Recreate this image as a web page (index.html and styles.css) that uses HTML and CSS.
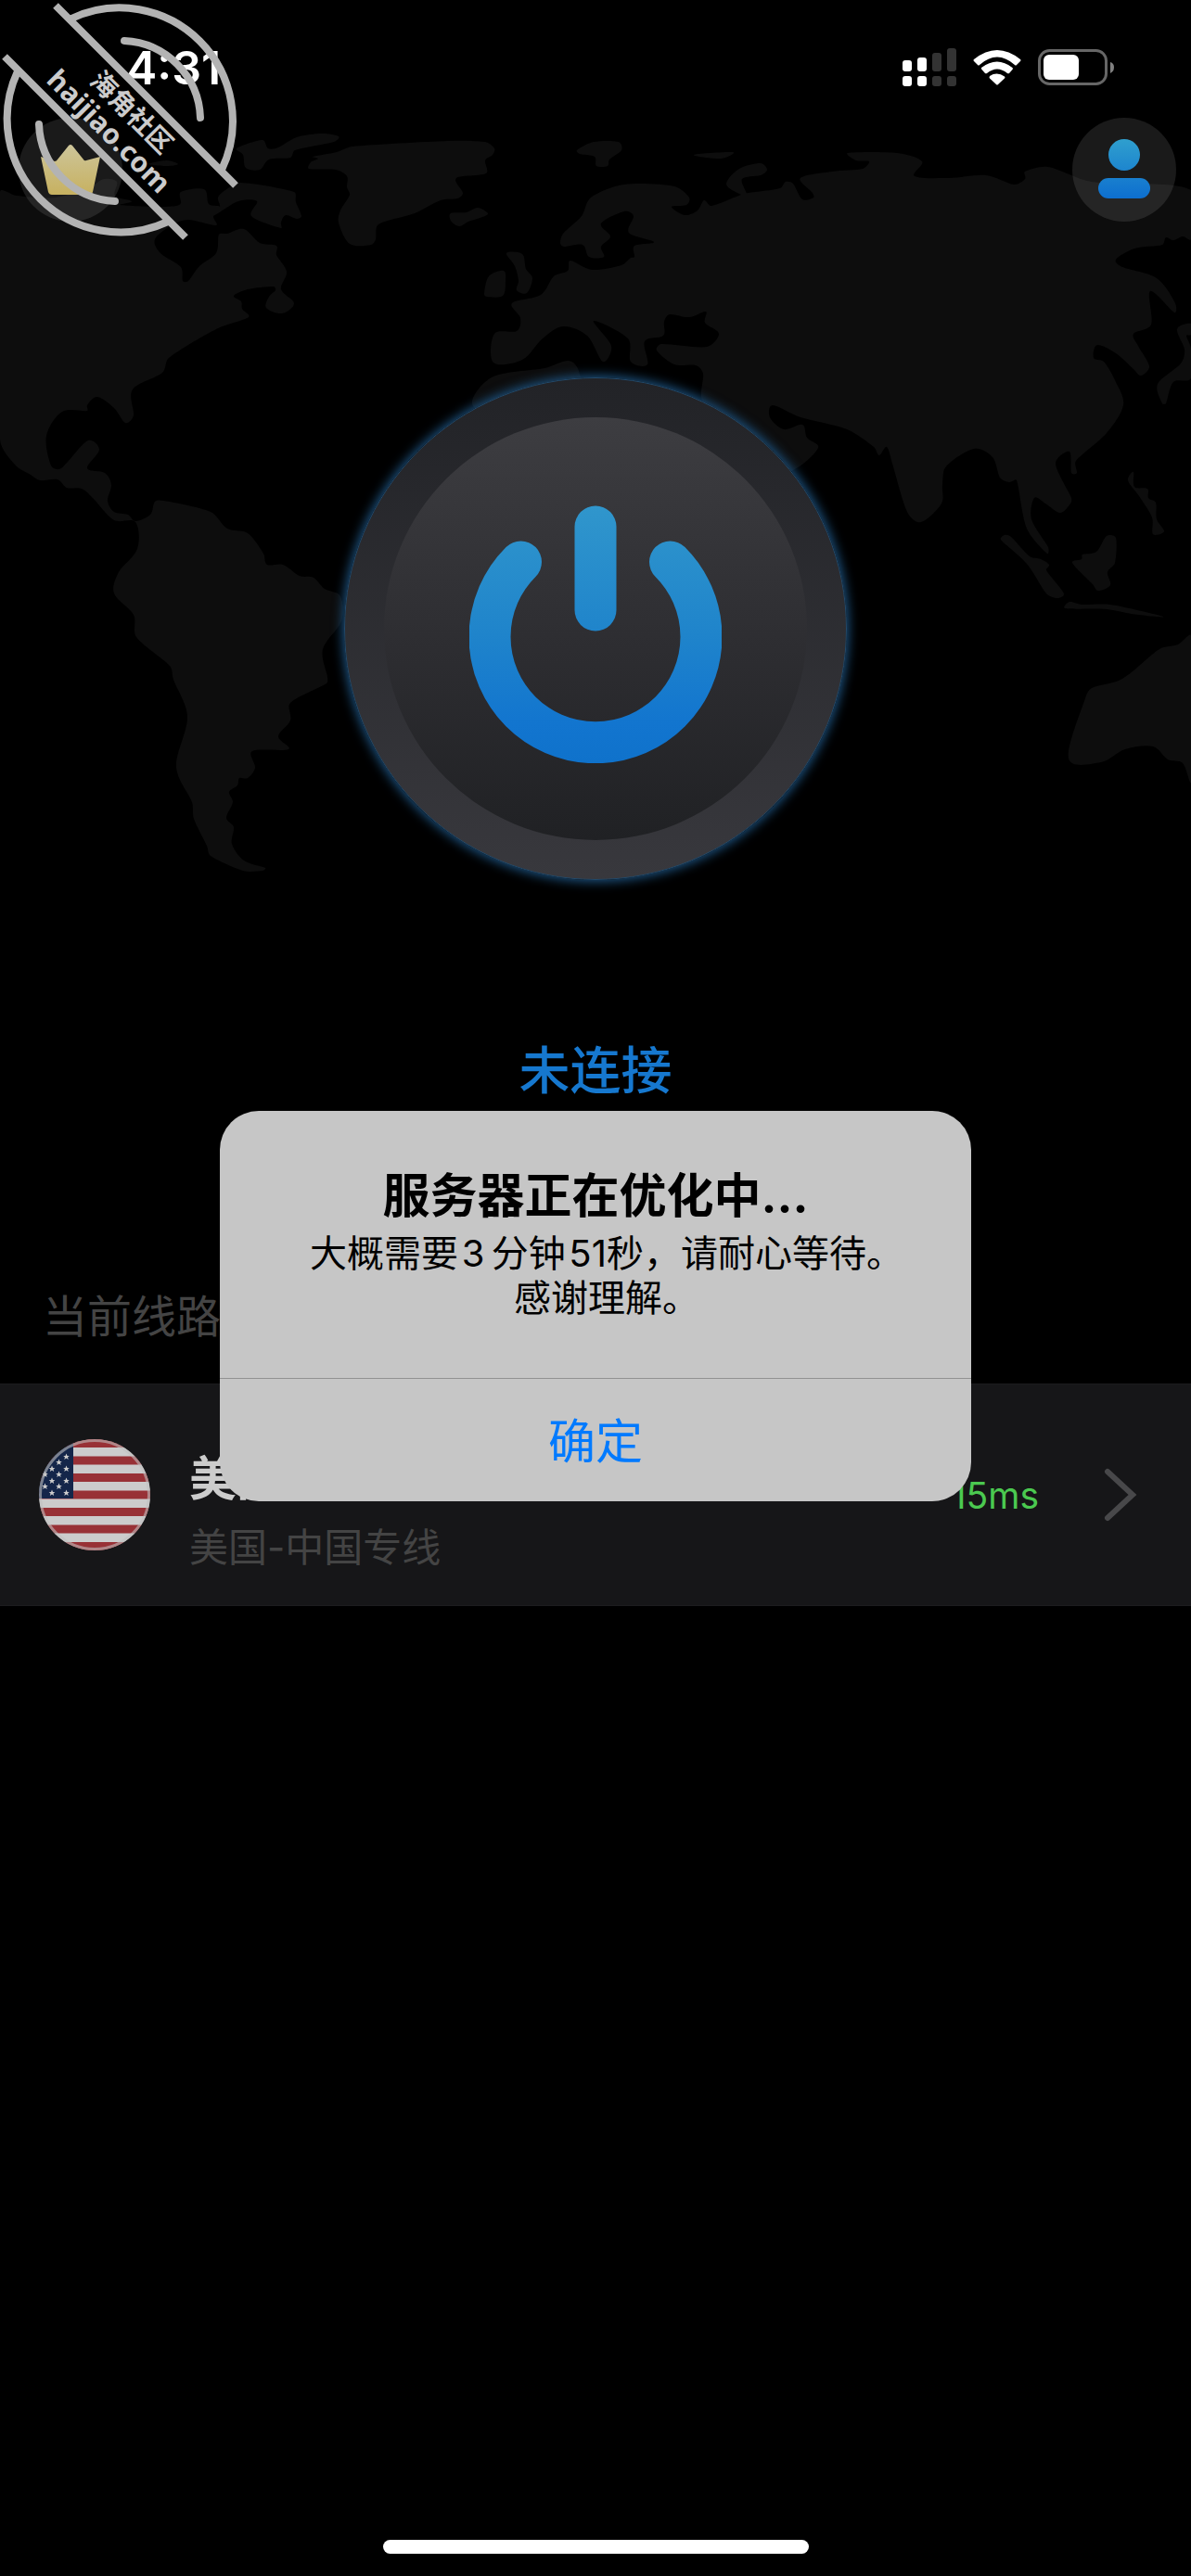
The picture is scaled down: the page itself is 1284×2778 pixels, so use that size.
FILE: index.html
```html
<!DOCTYPE html>
<html lang="zh-CN">

<head>
    <meta charset="UTF-8">
    <meta name="viewport" content="width=device-width, initial-scale=1.0">
    <title>未连接</title>
    <link rel="stylesheet" href="styles.css">
</head>

<body>
    <svg class="world-map" viewBox="0 0 1284 960" aria-hidden="true">
        <path id="land" />
    </svg>

    <header class="status-bar">
        <span class="time">4:31</span>
        <div class="status-icons">
            <svg width="58" height="42" viewBox="0 0 58 42" fill="#fff">
                <rect x="0" y="13" width="10" height="12" rx="3" />
                <rect x="16" y="10" width="10" height="15" rx="3" />
                <rect x="32" y="5" width="10" height="20" rx="3" fill="#333" />
                <rect x="48" y="0" width="10" height="25" rx="3" fill="#333" />
                <rect x="0" y="30" width="10" height="11" rx="3" />
                <rect x="16" y="30" width="10" height="11" rx="3" />
                <rect x="32" y="30" width="10" height="11" rx="3" fill="#333" />
                <rect x="48" y="30" width="10" height="11" rx="3" fill="#333" />
            </svg>
            <svg width="52" height="38" viewBox="0 0 52 38" fill="#fff">
                <path d="M1 10Q0 11 1 12L5 16Q6 17 7 16Q26 -1 45 16Q46 17 47 16L51 12Q52 11 51 10Q26 -10 1 10Z" />
                <path d="M9 19Q8.500 20 9.500 21L13 25Q14 25.500 15 25Q26 16 37 25Q38 25.500 39 25L42.500 21Q43.500 20 42.500 19Q26 6 9 19Z" />
                <path d="M18 28Q17 29.500 18 30.500L25 37Q26 38 27 37L34 30.500Q35 29.500 34 28.500Q26 23 18 28Z" />
            </svg>
            <svg width="83" height="40" viewBox="0 0 83 40">
                <rect x="1.500" y="1.500" width="72" height="36" rx="11" fill="none" stroke="#666" stroke-width="3" />
                <rect x="6" y="6" width="38" height="27" rx="6" fill="#fff" />
                <path d="M78 14Q82 15 82 19.500T78 26Z" fill="#808080" />
            </svg>
        </div>
    </header>

    <nav class="top-nav">
        <button class="round-btn" aria-label="VIP">
            <svg width="66" height="56" viewBox="0 0 66 56">
                <defs>
                    <linearGradient id="gold" x1="0" y1="0" x2="0" y2="1">
                        <stop offset="0" stop-color="#cdc59a" />
                        <stop offset="1" stop-color="#c7b160" />
                    </linearGradient>
                </defs>
                <path d="M1 14L16 19Q18 19 19 17L31 2Q33 0 35 2L47 17Q48 19 50 18L65 14L57 52Q56 55 53 55H13Q10 55 9 52Z" fill="url(#gold)" />
            </svg>
        </button>
        <button class="round-btn" aria-label="我的">
            <svg width="56" height="66" viewBox="0 0 56 66">
                <defs>
                    <linearGradient id="blue" gradientUnits="userSpaceOnUse" x1="0" y1="0" x2="0" y2="66">
                        <stop offset="0" stop-color="#2f9fce" />
                        <stop offset="1" stop-color="#0c6dcf" />
                    </linearGradient>
                </defs>
                <circle cx="28" cy="17" r="17" fill="url(#blue)" />
                <rect x="0" y="42" width="56" height="22" rx="11" fill="url(#blue)" />
            </svg>
        </button>
    </nav>

    <main class="content">
        <button class="power-btn" aria-label="连接">
            <span class="power-inner">
                <svg width="272" height="278" viewBox="0 0 272 278" fill="none" stroke="url(#power)" stroke-width="45" stroke-linecap="round">
                    <defs>
                        <linearGradient id="power" gradientUnits="userSpaceOnUse" x1="0" y1="0" x2="0" y2="278">
                            <stop offset="0" stop-color="#3096cc" />
                            <stop offset="0.500" stop-color="#1f84cb" />
                            <stop offset="0.850" stop-color="#1275cf" />
                            <stop offset="1" stop-color="#0f72cb" />
                        </linearGradient>
                    </defs>
                    <path d="M136 23V113" />
                    <path d="M55.500 61A114 114 0 1 0 216.500 61" />
                </svg>
            </span>
        </button>
        <p class="state">未连接</p>

        <h2 class="section-label">当前线路</h2>
        <a class="route" href="#">
            <svg class="flag" width="120" height="120" viewBox="0 0 120 120">
                <defs>
                    <clipPath id="round"><circle cx="60" cy="60" r="60" /></clipPath>
                    <path id="star" d="M0 -3.500L1 -1H3.300L1.500 .6L2.200 3L0 1.500L-2.200 3L-1.500 .6L-3.300 -1H-1Z" fill="#ccc" />
                </defs>
                <g clip-path="url(#round)">
                    <rect width="120" height="120" fill="#ccc" />
                    <path d="M0 4.500H120M0 23H120M0 41.500H120M0 60H120M0 78.500H120M0 97H120M0 115.500H120" stroke="#983136" stroke-width="9.200" />
                    <rect width="37" height="64" fill="#14264a" />
                    <use href="#star" x="29.500" y="19" />
                    <use href="#star" x="29.500" y="32" />
                    <use href="#star" x="29.500" y="45" />
                    <use href="#star" x="29.500" y="58" />
                    <use href="#star" x="21.500" y="25" />
                    <use href="#star" x="21.500" y="38" />
                    <use href="#star" x="21.500" y="51" />
                    <use href="#star" x="14" y="32" />
                    <use href="#star" x="14" y="45" />
                    <use href="#star" x="14" y="58" />
                    <use href="#star" x="6.500" y="38" />
                    <use href="#star" x="6.500" y="51" />
                    <circle cx="60" cy="60" r="58.500" fill="none" stroke="#c0c0c0" stroke-opacity="0.600" stroke-width="3" />
                </g>
            </svg>
            <span class="route-text">
                <strong class="route-name">美国</strong>
                <span class="route-line">美国-中国专线</span>
            </span>
            <span class="ping">15ms</span>
            <svg class="chevron" width="36" height="58" viewBox="0 0 36 58" fill="none" stroke="#48484a" stroke-width="6" stroke-linecap="round">
                <path d="M4 4L31 29L4 54" />
            </svg>
        </a>
    </main>

    <div class="home-indicator"></div>

    <div class="overlay">
        <div class="alert" role="alertdialog" aria-labelledby="alertTitle" aria-describedby="alertText">
            <div class="alert-body">
                <h1 class="alert-title" id="alertTitle">服务器正在优化中...</h1>
                <p class="alert-text" id="alertText">大概需要&#8202;3&thinsp;分钟&#8202;51秒，请耐心等待。<br>感谢理解。</p>
            </div>
            <button class="alert-btn">确定</button>
        </div>
    </div>

    <svg class="stamp" width="260" height="260" viewBox="0 0 260 260">
        <g fill="none" stroke="#b3b3b3" stroke-width="8">
            <path d="M60 6L254 200M5 61L200 256" />
            <path d="M77 20A122 122 0 0 1 239 183" />
            <path d="M19 77A122 122 0 0 0 181 239" />
            <path d="M134 44A86 86 0 0 1 216 127M42 134A86 86 0 0 0 124 217" stroke-linecap="round" />
        </g>
        <g class="stamp-text" text-anchor="middle">
            <text transform="translate(135 128) rotate(45)">海角社区</text>
            <text class="stamp-domain" transform="translate(110 149) rotate(45)">haijiao.com</text>
        </g>
    </svg>

    <script src="map.js"></script>
</body>

</html>
```

FILE: styles.css
```css
* {
    box-sizing: border-box;
    margin: 0;
    padding: 0;
}

body {
    font-family: 'Inter', 'Noto Sans CJK SC', sans-serif;
    background-color: #000;
    display: flex;
    flex-direction: column;
    min-height: 100vh;
    overflow-x: hidden;
    position: relative;
}

button {
    border: none;
    font-family: inherit;
    cursor: pointer;
}

svg {
    display: block;
    flex-shrink: 0;
}

.world-map {
    position: absolute;
    top: 0;
    left: 0;
    width: 100%;
    z-index: -1;
    fill: #0d0d0d;
}

.status-bar {
    height: 127px;
    padding: 19px 82px 0 136px;
    display: flex;
    justify-content: space-between;
    align-items: center;
    color: #fff;
}

.time {
    font-size: 50px;
    font-weight: 600;
}

.status-icons {
    display: flex;
    align-items: center;
    gap: 18px;
}

.top-nav {
    display: flex;
    justify-content: space-between;
    padding: 0 16px 0 20px;
}

.round-btn {
    width: 112px;
    height: 112px;
    border-radius: 50%;
    background-color: rgba(255, 255, 255, 0.1);
    display: flex;
    align-items: center;
    justify-content: center;
}

.content {
    display: flex;
    flex-direction: column;
    align-items: center;
}

.power-btn {
    width: 542px;
    height: 542px;
    margin-top: 168px;
    border-radius: 50%;
    border: 1px solid #234a6b;
    background: linear-gradient(#222327, #38383d);
    box-shadow: 0 0 12px 2px #1d5381;
    display: flex;
    align-items: center;
    justify-content: center;
}

.power-inner {
    width: 456px;
    height: 456px;
    border-radius: 50%;
    background: linear-gradient(#3d3d41, #2d2d31 55%, #202124);
    display: flex;
    align-items: center;
    justify-content: center;
    padding-top: 12px;
}

.state {
    margin-top: 165px;
    font-size: 55px;
    line-height: 80px;
    font-weight: 500;
    color: #1678cf;
}

.section-label {
    align-self: flex-start;
    margin-top: 190px;
    padding-left: 46px;
    font-size: 48px;
    line-height: 72px;
    font-weight: 400;
    color: #444;
}

.route {
    width: 100%;
    height: 240px;
    margin-top: 36px;
    padding: 0 58px 0 42px;
    display: flex;
    align-items: center;
    background-color: #161618;
    border-top: 1px solid #1c1c1e;
    border-bottom: 1px solid #1c1c1e;
    text-decoration: none;
}

.route-text {
    display: flex;
    flex-direction: column;
    gap: 6px;
    align-self: flex-end;
    margin-left: 42px;
    padding-bottom: 30px;
    flex: 1;
}

.route-name {
    font-size: 51px;
    line-height: 72px;
    color: #ccc;
}

.route-line {
    font-size: 42px;
    line-height: 64px;
    color: #444;
}

.ping {
    font-size: 39px;
    color: #4bc950;
    margin-right: 70px;
}

.home-indicator {
    width: 459px;
    height: 15px;
    margin: auto auto 24px;
    border-radius: 8px;
    background-color: #fff;
}

.overlay {
    position: absolute;
    inset: 0;
    padding-top: 39px;
    display: flex;
    align-items: center;
    justify-content: center;
}

.alert {
    width: 810px;
    max-width: 90%;
    border-radius: 42px;
    background-color: #c6c6c6;
    overflow: hidden;
    text-align: center;
    color: #000;
}

.alert-body {
    padding: 60px 48px 62px;
}

.alert-title {
    font-size: 51px;
    line-height: 64px;
    font-weight: 700;
}

/* left padding balances the empty half of the closing full stop */
.alert-text {
    margin-top: 6px;
    padding-left: 24px;
    font-size: 40px;
    line-height: 48px;
}

.alert-btn {
    width: 100%;
    height: 133px;
    padding-bottom: 4px;
    border-top: 1px solid #919191;
    background: none;
    font-size: 51px;
    color: #007aff;
}

.stamp {
    position: absolute;
    top: 0;
    left: 0;
}

.stamp-text {
    font-family: 'Noto Sans', 'Noto Sans CJK SC', sans-serif;
    font-size: 28px;
    font-weight: 700;
    fill: #ccc;
}

.stamp-domain {
    font-size: 30px;
}
```

FILE: map.js
```js
// coastlines as x,y pairs, clockwise
const coasts = [
    // Americas
    '0,207 18,211 60,213 100,200 112,193 126,196 124,211 142,217 130,221 173,223 190,222 195,219 195,207 220,204 225,220 237,223 230,233 233,243 203,237 185,243 167,258 173,273 195,288 197,303 203,303 215,287 233,273 236,253 245,252 263,247 280,262 298,265 298,275 309,293 303,312 317,327 304,338 287,332 290,320 297,313 295,309 267,312 252,319 260,325 261,333 268,342 233,355 182,386 175,402 143,420 144,448 135,456 123,440 105,428 94,437 94,443 67,444 50,470 55,502 64,506 73,498 95,475 107,485 94,505 113,510 120,523 116,540 123,552 138,555 146,562 162,555 167,541 177,540 227,552 245,570 267,575 284,597 288,609 305,609 323,621 338,623 350,635 367,643 368,670 348,700 353,730 352,737 313,758 313,777 300,794 311,808 272,810 275,828 267,839 258,839 256,847 247,854 251,865 244,882 252,892 250,910 263,928 286,936 283,939 262,939 227,923 223,912 209,883 207,865 190,827 202,773 187,733 183,718 147,687 144,663 123,640 128,617 148,592 146,563 123,561 100,537 88,527 72,526 62,517 43,518 33,512 17,502 0,474',
    // Arctic islands, Baffin, Greenland, Iceland
    '255,160 283,151 289,160 300,159 320,148 347,144 365,147 360,153 318,162 313,170 290,172 280,183 265,181 262,167',
    '160,177 180,173 192,177 180,179',
    '235,213 243,205 260,197 317,207 319,218 325,233 320,236 308,232 303,240 303,246 271,233 277,217 257,217 230,233 237,223',
    '333,182 335,175 343,171 337,169 363,164 380,158 483,152 523,153 533,160 531,167 523,173 524,187 492,192 499,208 493,214 475,216 447,230 408,242 405,258 400,264 377,263 365,240 367,227 377,210 374,202 374,190 362,183',
    '486,230 503,229 515,224 526,230 520,234 505,239 495,244 486,238',
    // Britain and Ireland
    '546,273 563,274 567,290 574,300 568,316 557,313 559,303 555,287',
    '522,317 527,298 543,292 545,303 542,319 525,320',
    // Svalbard, Novaya Zemlya
    '622,162 640,153 667,153 670,162 657,172 655,179 643,179 641,169 625,166',
    '748,167 790,164 777,171',
    '783,198 797,182 820,176 827,183 820,189 800,193 805,210 795,208',
    // Eurasia
    '604,262 607,252 627,233 637,213 673,199 727,201 743,213 740,221 724,223 738,232 752,227 759,216 767,222 799,210 807,208 841,203 847,196 855,198 865,215 877,213 875,207 863,192 897,185 930,182 937,174 923,173 914,165 967,165 994,174 986,190 1023,192 1063,189 1093,199 1105,193 1105,185 1130,180 1177,196 1284,205 1284,258 1275,255 1265,259 1257,256 1253,264 1223,268 1203,280 1210,288 1247,300 1267,327 1266,337 1240,314 1241,350 1222,360 1227,373 1239,395 1230,405 1222,398 1203,381 1183,372 1179,386 1190,390 1203,412 1211,437 1193,467 1160,497 1161,510 1155,510 1153,487 1138,500 1155,537 1154,543 1143,553 1127,543 1115,537 1112,560 1130,590 1129,597 1107,570 1096,518 1088,520 1078,515 1070,493 1050,484 1020,503 1016,523 1015,543 993,563 978,552 962,500 956,482 948,491 942,482 913,463 863,450 833,437 830,450 845,463 865,458 870,472 882,483 855,507 800,520 757,432 758,403 750,394 727,393 708,378 713,371 762,374 775,360 760,348 761,336 743,342 722,339 716,347 715,362 695,368 698,393 680,390 677,365 640,346 659,373 650,390 633,362 607,352 585,365 563,388 532,391 533,360 557,357 561,343 552,327 583,318 597,298 612,292 615,281 638,291 670,286 680,278 684,277 684,265 705,261 678,251 683,233 673,228 648,241 658,255 648,266 651,277 635,277 628,264 608,266',
    // Africa
    '510,438 530,407 587,397 613,389 624,400 624,430 560,450',
    // Japan, Philippines, Indonesia
    '1284,349 1269,355 1277,377 1273,392 1248,414 1253,435 1257,435 1265,412 1284,408 1284,376 1279,362 1284,361',
    '1222,509 1216,518 1228,535 1242,558 1243,576 1255,573 1247,560 1246,542 1238,537 1237,527 1223,525',
    '1079,582 1083,577 1090,579 1110,600 1122,603 1131,609 1128,615 1147,640 1140,645 1128,640 1107,608',
    '1148,656 1153,649 1167,652 1197,652 1254,665 1220,662 1193,657',
    '1156,607 1166,603 1167,598 1182,595 1193,578 1203,580 1202,607 1194,617 1197,631 1184,637 1178,630',
    // Australia
    '1152,818 1170,753 1177,742 1210,732 1250,700 1270,695 1284,686 1284,843 1275,823 1259,819 1243,805 1213,808 1187,822'
];

// run a smooth closed curve through all points of a coast
function smoothPath(coast) {
    const pts = coast.split(' ').map(p => p.split(',').map(Number));
    const n = pts.length;
    let d = 'M' + pts[0];
    for (let i = 0; i < n; i++) {
        const a = pts[(i + n - 1) % n];
        const b = pts[i];
        const c = pts[(i + 1) % n];
        const e = pts[(i + 2) % n];
        const len = Math.hypot(c[0] - b[0], c[1] - b[1]);
        // keep handles short next to long segments so they do not overshoot
        const k1 = Math.min(1 / 6, len / 3 / (Math.hypot(c[0] - a[0], c[1] - a[1]) || 1));
        const k2 = Math.min(1 / 6, len / 3 / (Math.hypot(e[0] - b[0], e[1] - b[1]) || 1));
        const c1 = [b[0] + (c[0] - a[0]) * k1, b[1] + (c[1] - a[1]) * k1];
        const c2 = [c[0] - (e[0] - b[0]) * k2, c[1] - (e[1] - b[1]) * k2];
        d += 'C' + c1 + ' ' + c2 + ' ' + c;
    }
    return d + 'Z';
}

document.getElementById('land').setAttribute('d', coasts.map(smoothPath).join(''));
```
